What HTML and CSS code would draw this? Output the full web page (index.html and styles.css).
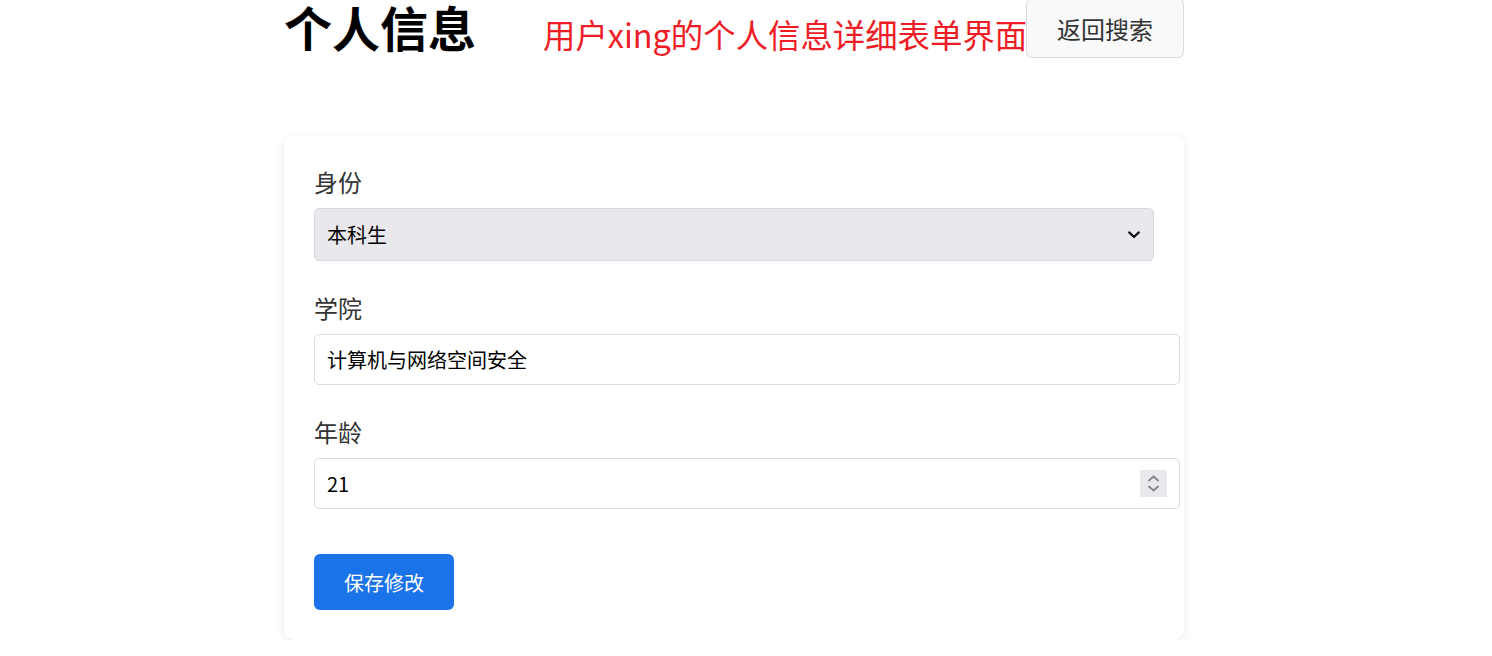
FILE: index.html
```html
<!DOCTYPE html>
<html lang="zh-CN">
<head>
<meta charset="utf-8">
<title>个人信息</title>
<link rel="stylesheet" href="styles.css">
</head>
<body>
<div class="page">
  <header class="header">
    <h1 class="title">个人信息</h1>
    <span class="subtitle">用户xing的个人信息详细表单界面</span>
    <button class="back-btn" type="button">返回搜索</button>
  </header>
  <form class="card">
    <div class="group">
      <label class="label" for="role">身份</label>
      <div class="field">
        <select class="select" id="role">
          <option>本科生</option>
          <option>研究生</option>
          <option>教师</option>
        </select>
        <svg class="chevron" width="12" height="8" viewBox="0 0 12 8" aria-hidden="true">
          <path d="M1.2 1.4 L6 6 L10.8 1.4" fill="none" stroke="#111" stroke-width="2.2" stroke-linecap="round" stroke-linejoin="round"/>
        </svg>
      </div>
    </div>
    <div class="group">
      <label class="label" for="college">学院</label>
      <div class="field">
        <input class="input" id="college" type="text" value="计算机与网络空间安全">
      </div>
    </div>
    <div class="group">
      <label class="label" for="age">年龄</label>
      <div class="field">
        <input class="input" id="age" type="number" value="21">
        <span class="spinner" aria-hidden="true">
          <svg width="27" height="27" viewBox="0 0 27 27">
            <path d="M9 10.5 L13.5 6.5 L18 10.5" fill="none" stroke="#85858c" stroke-width="1.8" stroke-linecap="round" stroke-linejoin="round"/>
            <path d="M9 16.5 L13.5 20.5 L18 16.5" fill="none" stroke="#85858c" stroke-width="1.8" stroke-linecap="round" stroke-linejoin="round"/>
          </svg>
        </span>
      </div>
    </div>
    <button class="save-btn" type="button">保存修改</button>
  </form>
</div>
</body>
</html>
```
FILE: styles.css
```css
html, body {
  margin: 0;
  padding: 0;
  background: #ffffff;
}
body {
  font-family: "Noto Sans CJK SC", "Noto Sans", sans-serif;
  color: #333;
}
.page {
  width: 900px;
  margin: 0 0 0 284px;
}
.header {
  display: flex;
  align-items: flex-start;
  height: 58px;
}
.title {
  margin: 0;
  font-size: 48px;
  font-weight: 700;
  line-height: 52px;
  color: #000;
  white-space: nowrap;
  flex-shrink: 0;
}
.subtitle {
  flex: 1 1 0;
  min-width: 0;
  margin-left: 67px;
  margin-top: 12px;
  font-size: 32.4px;
  line-height: 44px;
  color: #ee1c25;
  white-space: nowrap;
}
.back-btn {
  margin-top: -2px;
  height: 60px;
  width: 158px;
  padding: 0;
  font-family: inherit;
  font-size: 24px;
  color: #333;
  background: #f8f9fa;
  border: 1px solid #dcdcdc;
  border-radius: 6px;
  flex-shrink: 0;
  position: relative;
}
.card {
  margin-top: 78px;
  background: #fff;
  border-radius: 10px;
  box-shadow: 0 2px 10px rgba(0, 0, 0, 0.09);
  padding: 30px;
  display: flex;
  flex-direction: column;
}
.group {
  display: flex;
  flex-direction: column;
  align-items: flex-start;
  margin-bottom: 31px;
}
.label {
  display: block;
  font-size: 24px;
  line-height: 32px;
  margin-bottom: 10px;
  color: #333;
}
.field {
  position: relative;
}
.select {
  display: block;
  appearance: none;
  -webkit-appearance: none;
  box-sizing: border-box;
  width: 840px;
  height: 53px;
  padding: 0 12px;
  font-family: inherit;
  font-size: 20px;
  color: #000;
  background-color: #e9e9ed;
  border: 1px solid #d8d8dc;
  border-radius: 5px;
}
.chevron {
  position: absolute;
  right: 14px;
  top: 23px;
}
.input {
  display: block;
  box-sizing: border-box;
  width: 866px;
  height: 51px;
  padding: 0 12px;
  font-family: inherit;
  font-size: 20px;
  color: #000;
  background: #fff;
  border: 1px solid #dcdcdc;
  border-radius: 5px;
  outline: none;
}
.input[type="number"] {
  -moz-appearance: textfield;
}
.input::-webkit-inner-spin-button,
.input::-webkit-outer-spin-button {
  -webkit-appearance: none;
  margin: 0;
}
.spinner {
  position: absolute;
  right: 13px;
  top: 12px;
  width: 27px;
  height: 27px;
  background: #e9e9ed;
  display: block;
}
.spinner svg {
  display: block;
}
.save-btn {
  align-self: flex-start;
  margin-top: 14px;
  width: 140px;
  height: 56px;
  padding: 0;
  font-family: inherit;
  font-size: 20px;
  color: #fff;
  background: #1a73e8;
  border: none;
  border-radius: 6px;
}
```
